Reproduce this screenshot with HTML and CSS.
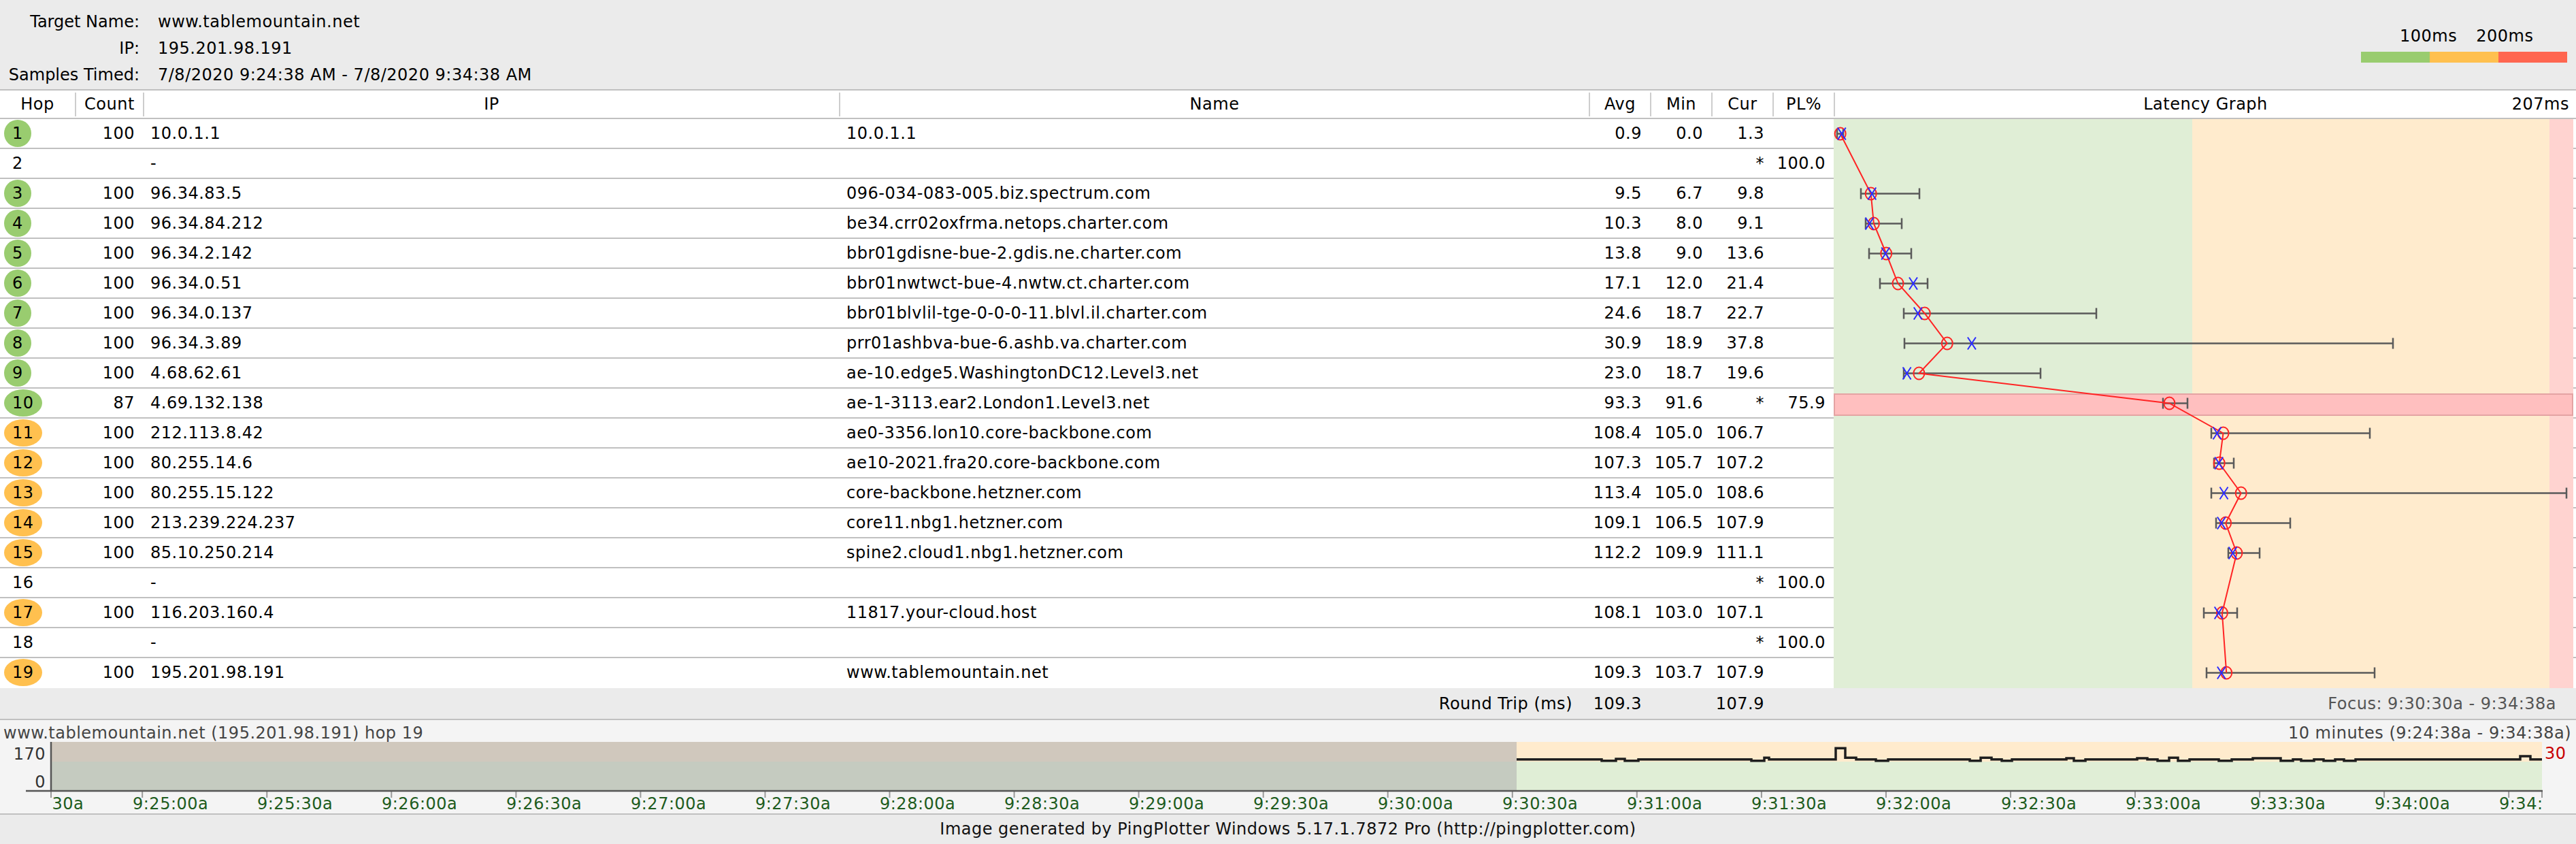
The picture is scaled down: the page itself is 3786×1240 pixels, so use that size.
FILE: index.html
```html
<!DOCTYPE html>
<html>
<head>
<meta charset="utf-8">
<title>PingPlotter</title>
<link rel="stylesheet" href="styles.css">
</head>
<body>
<div class="info">
  <div class="meta">
    <div class="k">Target Name:</div><div class="v">www.tablemountain.net</div>
    <div class="k">IP:</div><div class="v">195.201.98.191</div>
    <div class="k">Samples Timed:</div><div class="v">7/8/2020 9:24:38 AM - 7/8/2020 9:34:38 AM</div>
  </div>
  <div class="legend">
    <div class="legend-labels"><span>100ms</span><span>200ms</span></div>
    <div class="legend-bar"><span class="lg-g"></span><span class="lg-o"></span><span class="lg-r"></span></div>
  </div>
</div>

<div class="thead">
  <div class="th first">Hop</div>
  <div class="th">Count</div>
  <div class="th">IP</div>
  <div class="th">Name</div>
  <div class="th">Avg</div>
  <div class="th">Min</div>
  <div class="th">Cur</div>
  <div class="th">PL%</div>
  <div class="th graph-h"><span></span><span>Latency Graph</span><span class="max">207ms</span></div>
</div>

<div class="tbody">
  <div class="rows">
    <div class="row"><div class="hop"><span class="badge g">1</span></div><div class="num">100</div><div class="txt">10.0.1.1</div><div class="txt">10.0.1.1</div><div class="num">0.9</div><div class="num">0.0</div><div class="num">1.3</div><div class="num"></div></div>
    <div class="row"><div class="hop"><span class="badge">2</span></div><div class="num"></div><div class="txt">-</div><div class="txt"></div><div class="num"></div><div class="num"></div><div class="num">*</div><div class="num">100.0</div></div>
    <div class="row"><div class="hop"><span class="badge g">3</span></div><div class="num">100</div><div class="txt">96.34.83.5</div><div class="txt">096-034-083-005.biz.spectrum.com</div><div class="num">9.5</div><div class="num">6.7</div><div class="num">9.8</div><div class="num"></div></div>
    <div class="row"><div class="hop"><span class="badge g">4</span></div><div class="num">100</div><div class="txt">96.34.84.212</div><div class="txt">be34.crr02oxfrma.netops.charter.com</div><div class="num">10.3</div><div class="num">8.0</div><div class="num">9.1</div><div class="num"></div></div>
    <div class="row"><div class="hop"><span class="badge g">5</span></div><div class="num">100</div><div class="txt">96.34.2.142</div><div class="txt">bbr01gdisne-bue-2.gdis.ne.charter.com</div><div class="num">13.8</div><div class="num">9.0</div><div class="num">13.6</div><div class="num"></div></div>
    <div class="row"><div class="hop"><span class="badge g">6</span></div><div class="num">100</div><div class="txt">96.34.0.51</div><div class="txt">bbr01nwtwct-bue-4.nwtw.ct.charter.com</div><div class="num">17.1</div><div class="num">12.0</div><div class="num">21.4</div><div class="num"></div></div>
    <div class="row"><div class="hop"><span class="badge g">7</span></div><div class="num">100</div><div class="txt">96.34.0.137</div><div class="txt">bbr01blvlil-tge-0-0-0-11.blvl.il.charter.com</div><div class="num">24.6</div><div class="num">18.7</div><div class="num">22.7</div><div class="num"></div></div>
    <div class="row"><div class="hop"><span class="badge g">8</span></div><div class="num">100</div><div class="txt">96.34.3.89</div><div class="txt">prr01ashbva-bue-6.ashb.va.charter.com</div><div class="num">30.9</div><div class="num">18.9</div><div class="num">37.8</div><div class="num"></div></div>
    <div class="row"><div class="hop"><span class="badge g">9</span></div><div class="num">100</div><div class="txt">4.68.62.61</div><div class="txt">ae-10.edge5.WashingtonDC12.Level3.net</div><div class="num">23.0</div><div class="num">18.7</div><div class="num">19.6</div><div class="num"></div></div>
    <div class="row"><div class="hop"><span class="badge g">10</span></div><div class="num">87</div><div class="txt">4.69.132.138</div><div class="txt">ae-1-3113.ear2.London1.Level3.net</div><div class="num">93.3</div><div class="num">91.6</div><div class="num">*</div><div class="num">75.9</div></div>
    <div class="row"><div class="hop"><span class="badge o">11</span></div><div class="num">100</div><div class="txt">212.113.8.42</div><div class="txt">ae0-3356.lon10.core-backbone.com</div><div class="num">108.4</div><div class="num">105.0</div><div class="num">106.7</div><div class="num"></div></div>
    <div class="row"><div class="hop"><span class="badge o">12</span></div><div class="num">100</div><div class="txt">80.255.14.6</div><div class="txt">ae10-2021.fra20.core-backbone.com</div><div class="num">107.3</div><div class="num">105.7</div><div class="num">107.2</div><div class="num"></div></div>
    <div class="row"><div class="hop"><span class="badge o">13</span></div><div class="num">100</div><div class="txt">80.255.15.122</div><div class="txt">core-backbone.hetzner.com</div><div class="num">113.4</div><div class="num">105.0</div><div class="num">108.6</div><div class="num"></div></div>
    <div class="row"><div class="hop"><span class="badge o">14</span></div><div class="num">100</div><div class="txt">213.239.224.237</div><div class="txt">core11.nbg1.hetzner.com</div><div class="num">109.1</div><div class="num">106.5</div><div class="num">107.9</div><div class="num"></div></div>
    <div class="row"><div class="hop"><span class="badge o">15</span></div><div class="num">100</div><div class="txt">85.10.250.214</div><div class="txt">spine2.cloud1.nbg1.hetzner.com</div><div class="num">112.2</div><div class="num">109.9</div><div class="num">111.1</div><div class="num"></div></div>
    <div class="row"><div class="hop"><span class="badge">16</span></div><div class="num"></div><div class="txt">-</div><div class="txt"></div><div class="num"></div><div class="num"></div><div class="num">*</div><div class="num">100.0</div></div>
    <div class="row"><div class="hop"><span class="badge o">17</span></div><div class="num">100</div><div class="txt">116.203.160.4</div><div class="txt">11817.your-cloud.host</div><div class="num">108.1</div><div class="num">103.0</div><div class="num">107.1</div><div class="num"></div></div>
    <div class="row"><div class="hop"><span class="badge">18</span></div><div class="num"></div><div class="txt">-</div><div class="txt"></div><div class="num"></div><div class="num"></div><div class="num">*</div><div class="num">100.0</div></div>
    <div class="row"><div class="hop"><span class="badge o">19</span></div><div class="num">100</div><div class="txt">195.201.98.191</div><div class="txt">www.tablemountain.net</div><div class="num">109.3</div><div class="num">103.7</div><div class="num">107.9</div><div class="num"></div></div>
  </div>
  <svg class="graph" width="1091" height="836" viewBox="0 0 1091 836">
    <rect class="z-g" x="0" y="0" width="527" height="836"/>
    <rect class="z-o" x="527" y="0" width="525" height="836"/>
    <rect class="z-r" x="1052" y="0" width="35" height="836"/>
    <rect class="z-w" x="1087" y="0" width="4" height="836"/>
    <g class="sep">
      <rect x="1087" y="42" width="4" height="2"/><rect x="1087" y="86" width="4" height="2"/><rect x="1087" y="130" width="4" height="2"/>
      <rect x="1087" y="174" width="4" height="2"/><rect x="1087" y="218" width="4" height="2"/><rect x="1087" y="262" width="4" height="2"/>
      <rect x="1087" y="306" width="4" height="2"/><rect x="1087" y="350" width="4" height="2"/><rect x="1087" y="394" width="4" height="2"/>
      <rect x="1087" y="438" width="4" height="2"/><rect x="1087" y="482" width="4" height="2"/><rect x="1087" y="526" width="4" height="2"/>
      <rect x="1087" y="570" width="4" height="2"/><rect x="1087" y="614" width="4" height="2"/><rect x="1087" y="658" width="4" height="2"/>
      <rect x="1087" y="702" width="4" height="2"/><rect x="1087" y="746" width="4" height="2"/><rect x="1087" y="790" width="4" height="2"/>
    </g>
    <rect class="loss" x="1" y="404" width="1085" height="31"/>
    <g class="bar">
      <path d="M5 21.5H14M5 14v15M14 14v15"/>
      <path d="M40 109.5H126M40 101.5v16M126 101.5v16"/>
      <path d="M47 153.5H100M47 145.5v16M100 145.5v16"/>
      <path d="M52 197.5H114M52 189.5v16M114 189.5v16"/>
      <path d="M68 241.5H138M68 233.5v16M138 233.5v16"/>
      <path d="M103 285.5H386M103 277.5v16M386 277.5v16"/>
      <path d="M104 329.5H822M104 321.5v16M822 321.5v16"/>
      <path d="M103 373.5H304M103 365.5v16M304 365.5v16"/>
      <path d="M484 417.5H520M484 409.5v16M520 409.5v16"/>
      <path d="M555 461.5H788M555 453.5v16M788 453.5v16"/>
      <path d="M559 505.5H588M559 497.5v16M588 497.5v16"/>
      <path d="M555 549.5H1077M555 541.5v16M1077 541.5v16"/>
      <path d="M562 593.5H671M562 585.5v16M671 585.5v16"/>
      <path d="M580 637.5H626M580 629.5v16M626 629.5v16"/>
      <path d="M544 725.5H593M544 717.5v16M593 717.5v16"/>
      <path d="M548 813.5H795M548 805.5v16M795 805.5v16"/>
    </g>
    <polyline class="trace" points="9.7,21.5 54.7,109.5 58.9,153.5 77.2,197.5 94.5,241.5 133.8,285.5 166.8,329.5 125.4,373.5 493.4,417.5 572.5,461.5 566.7,505.5 598.7,549.5 576.1,593.5 592.4,637.5 570.9,725.5 577.2,813.5"/>
    <g class="avg">
      <ellipse cx="9.7" cy="21.5" rx="8" ry="9"/>
      <ellipse cx="54.7" cy="109.5" rx="8" ry="9"/>
      <ellipse cx="58.9" cy="153.5" rx="8" ry="9"/>
      <ellipse cx="77.2" cy="197.5" rx="8" ry="9"/>
      <ellipse cx="94.5" cy="241.5" rx="8" ry="9"/>
      <ellipse cx="133.8" cy="285.5" rx="8" ry="9"/>
      <ellipse cx="166.8" cy="329.5" rx="8" ry="9"/>
      <ellipse cx="125.4" cy="373.5" rx="8" ry="9"/>
      <ellipse cx="493.4" cy="417.5" rx="8" ry="9"/>
      <ellipse cx="572.5" cy="461.5" rx="8" ry="9"/>
      <ellipse cx="566.7" cy="505.5" rx="8" ry="9"/>
      <ellipse cx="598.7" cy="549.5" rx="8" ry="9"/>
      <ellipse cx="576.1" cy="593.5" rx="8" ry="9"/>
      <ellipse cx="592.4" cy="637.5" rx="8" ry="9"/>
      <ellipse cx="570.9" cy="725.5" rx="8" ry="9"/>
      <ellipse cx="577.2" cy="813.5" rx="8" ry="9"/>
    </g>
    <g class="cur">
      <path d="M5.8 12.5L17.8 30.5M17.8 12.5L5.8 30.5"/>
      <path d="M50.3 100.5L62.3 118.5M62.3 100.5L50.3 118.5"/>
      <path d="M46.6 144.5L58.6 162.5M58.6 144.5L46.6 162.5"/>
      <path d="M70.2 188.5L82.2 206.5M82.2 188.5L70.2 206.5"/>
      <path d="M111 232.5L123 250.5M123 232.5L111 250.5"/>
      <path d="M117.8 276.5L129.8 294.5M129.8 276.5L117.8 294.5"/>
      <path d="M196.9 320.5L208.9 338.5M208.9 320.5L196.9 338.5"/>
      <path d="M101.6 364.5L113.6 382.5M113.6 364.5L101.6 382.5"/>
      <path d="M557.6 452.5L569.6 470.5M569.6 452.5L557.6 470.5"/>
      <path d="M560.2 496.5L572.2 514.5M572.2 496.5L560.2 514.5"/>
      <path d="M567.5 540.5L579.5 558.5M579.5 540.5L567.5 558.5"/>
      <path d="M563.9 584.5L575.9 602.5M575.9 584.5L563.9 602.5"/>
      <path d="M580.5 628.5L592.5 646.5M592.5 628.5L580.5 646.5"/>
      <path d="M559.7 716.5L571.7 734.5M571.7 716.5L559.7 734.5"/>
      <path d="M563.9 804.5L575.9 822.5M575.9 804.5L563.9 822.5"/>
    </g>
  </svg>
</div>

<div class="rt">
  <div></div><div></div><div></div>
  <div class="rt-label">Round Trip (ms)</div>
  <div class="num">109.3</div>
  <div></div>
  <div class="num">107.9</div>
  <div></div>
  <div class="focus">Focus: 9:30:30a - 9:34:38a</div>
</div>

<div class="hist">
  <div class="hist-head">
    <span>www.tablemountain.net (195.201.98.191) hop 19</span>
    <span>10 minutes (9:24:38a - 9:34:38a)</span>
  </div>
  <svg class="hchart" width="3786" height="105" viewBox="0 0 3786 105">
    <defs>
      <clipPath id="tclip"><rect x="77" y="70" width="3660" height="35"/></clipPath>
    </defs>
    <rect class="h-tan" x="75" y="0" width="2154" height="29"/>
    <rect class="h-sage" x="75" y="29" width="2154" height="43"/>
    <rect class="z-o" x="2229" y="0" width="1507" height="29"/>
    <rect class="z-g" x="2229" y="29" width="1507" height="43"/>
    <path class="step" d="M2229 25.7H2354V27.7H2375V25H2388V27.7H2408V25.7H2574V27.7H2593V23.3H2600V25.7H2698V9.3H2712V23.3H2728V25.7H2757V27.7H2775V25.7H2895V27.7H2911V23.3H2927V25.7H2942V27.7H2957V25.7H3037V24H3048V27.7H3065V25.7H3141V24H3156V25.7H3171V27.7H3188V23.3H3201V27.7H3218V25.7H3261V27.7H3280V25.7H3311V24H3352V27.7H3370V25.7H3382V27.7H3401V25.7H3415V27.7H3432V25.7H3445V27.7H3462V25.7H3704V21H3719V25.7H3736"/>
    <g class="tick">
      <path d="M75 72v10M209.2 72v10M392.3 72v10M575.3 72v10M758.4 72v10M941.4 72v10M1124.5 72v10M1307.5 72v10M1490.6 72v10M1673.6 72v10M1856.7 72v10M2039.7 72v10M2222.8 72v10M2405.8 72v10M2588.9 72v10M2771.9 72v10M2955 72v10M3138 72v10M3321.1 72v10M3504.1 72v10M3687.2 72v10M3736 72v10"/>
    </g>
    <path class="axis" d="M75 0V73M38 72H3737"/>
    <text class="ax" x="67" y="26" text-anchor="end">170</text>
    <text class="ax" x="67" y="67" text-anchor="end">0</text>
    <text class="ax ax-red" x="3740" y="25">30</text>
    <g class="tlab" clip-path="url(#tclip)">
      <text x="12" y="99">9:24:30a</text>
      <text x="195" y="99">9:25:00a</text>
      <text x="378" y="99">9:25:30a</text>
      <text x="561" y="99">9:26:00a</text>
      <text x="744" y="99">9:26:30a</text>
      <text x="927" y="99">9:27:00a</text>
      <text x="1110" y="99">9:27:30a</text>
      <text x="1293" y="99">9:28:00a</text>
      <text x="1476" y="99">9:28:30a</text>
      <text x="1659" y="99">9:29:00a</text>
      <text x="1842" y="99">9:29:30a</text>
      <text x="2025" y="99">9:30:00a</text>
      <text x="2208" y="99">9:30:30a</text>
      <text x="2391" y="99">9:31:00a</text>
      <text x="2574" y="99">9:31:30a</text>
      <text x="2757" y="99">9:32:00a</text>
      <text x="2941" y="99">9:32:30a</text>
      <text x="3124" y="99">9:33:00a</text>
      <text x="3307" y="99">9:33:30a</text>
      <text x="3490" y="99">9:34:00a</text>
      <text x="3673" y="99">9:34:30a</text>
    </g>
  </svg>
</div>

<div class="foot">Image generated by PingPlotter Windows 5.17.1.7872 Pro (http://pingplotter.com)</div>
</body>
</html>
```

FILE: styles.css
```css
html, body {
  margin: 0;
  padding: 0;
}
body {
  width: 3786px;
  height: 1240px;
  overflow: hidden;
  background: #ebebeb;
  color: #000;
  font-family: "DejaVu Sans", Verdana, sans-serif;
  font-size: 24px;
  letter-spacing: 0.5px;
}

/* ---------- top info panel ---------- */
.info {
  height: 131px;
  display: flex;
  justify-content: space-between;
  background: #ebebeb;
}
.meta {
  display: grid;
  grid-template-columns: 205px auto;
  column-gap: 27px;
  grid-auto-rows: 39px;
  align-items: center;
  padding-top: 12px;
}
.meta .k {
  text-align: right;
  white-space: nowrap;
  letter-spacing: 0;
}
.legend {
  width: 303px;
  padding: 40px 13px 0 0;
}
.legend-labels {
  display: flex;
  gap: 28px;
  height: 26px;
  line-height: 26px;
  padding-left: 57px;
  white-space: nowrap;
}
.legend-bar {
  display: flex;
  height: 16px;
  margin-top: 10px;
}
.legend-bar span { flex: 1; }
.lg-g { background: #99cc6f; }
.lg-o { background: #ffc04f; }
.lg-r { background: #ff6650; }

/* ---------- table header ---------- */
.thead {
  display: grid;
  grid-template-columns: 110px 100px 1023px 1102px 90px 90px 90px 90px 1091px;
  height: 44px;
  box-sizing: border-box;
  padding: 3px 0 2px;
  background: #fff;
  border-top: 2px solid #c0c0c0;
  border-bottom: 2px solid #c0c0c0;
}
.th {
  height: 35px;
  line-height: 35px;
  text-align: center;
  border-left: 2px solid #cdcdcd;
  box-sizing: border-box;
  white-space: nowrap;
}
.th.first { border-left: none; }
.graph-h {
  display: grid;
  grid-template-columns: 1fr auto 1fr;
}
.graph-h .max {
  justify-self: end;
  padding-right: 10px;
}

/* ---------- table body ---------- */
.tbody {
  display: flex;
  height: 836px;
  background: #fff;
}
.rows { width: 2695px; }
.row {
  display: grid;
  grid-template-columns: 110px 100px 1023px 1102px 90px 90px 90px 90px;
  height: 44px;
  box-sizing: border-box;
  border-bottom: 2px solid #c0c0c0;
  align-items: center;
  white-space: nowrap;
}
.row:last-child {
  border-bottom: none;
  padding-bottom: 2px;
}
.num {
  text-align: right;
  padding-right: 12px;
}
.txt { padding-left: 11px; }
.hop {
  display: flex;
  align-items: center;
  padding-left: 6px;
}
.badge {
  display: inline-block;
  height: 40px;
  line-height: 40px;
  padding: 0 12px;
  border-radius: 50%;
  text-align: center;
}
.badge.g { background: #99cc6f; }
.badge.o { background: #ffc04f; }

.graph { display: block; }
.z-g { fill: #e0eed6; }
.z-o { fill: #ffebcd; }
.z-r { fill: #ffd3d0; }
.z-w { fill: #ffffff; }
.sep rect { fill: #c0c0c0; }
.loss {
  fill: #ffbfbf;
  stroke: #e4a3a3;
  stroke-width: 2;
}
.bar path {
  fill: none;
  stroke: #5a5a5a;
  stroke-width: 2.5;
}
.trace {
  fill: none;
  stroke: #ff2424;
  stroke-width: 2;
}
.avg ellipse {
  fill: none;
  stroke: #ff2424;
  stroke-width: 2;
}
.cur path {
  fill: none;
  stroke: #2a2aff;
  stroke-width: 2;
}

/* ---------- round trip row ---------- */
.rt {
  display: grid;
  grid-template-columns: 110px 100px 1023px 1102px 90px 90px 90px 90px 1091px;
  height: 45px;
  align-items: center;
  background: #ebebeb;
  white-space: nowrap;
}
.rt-label {
  text-align: right;
  padding-right: 24px;
}
.focus {
  text-align: right;
  padding-right: 29px;
  color: #555;
}

/* ---------- history panel ---------- */
.hist {
  background: #f4f4f4;
  border-top: 2px solid #c0c0c0;
  border-bottom: 2px solid #c0c0c0;
}
.hist-head {
  height: 32px;
  box-sizing: border-box;
  display: flex;
  justify-content: space-between;
  padding: 6px 7px 0 5px;
  line-height: 26px;
  color: #444;
  white-space: nowrap;
}
.hchart { display: block; }
.h-tan { fill: #d0c8bd; }
.h-sage { fill: #c5cbc0; }
.step {
  fill: none;
  stroke: #1e1e1e;
  stroke-width: 3.5;
}
.tick path {
  fill: none;
  stroke: #9a9a9a;
  stroke-width: 2;
}
.axis {
  fill: none;
  stroke: #555;
  stroke-width: 2.5;
}
.ax {
  font-family: "DejaVu Sans", Verdana, sans-serif;
  font-size: 24px;
  fill: #333;
}
.ax-red { fill: #c80000; }
.tlab text {
  font-family: "DejaVu Sans", Verdana, sans-serif;
  font-size: 24px;
  fill: #1e5c1e;
}

/* ---------- footer ---------- */
.foot {
  height: 43px;
  line-height: 43px;
  text-align: center;
  background: #ebebeb;
  color: #111;
  white-space: nowrap;
}
```
